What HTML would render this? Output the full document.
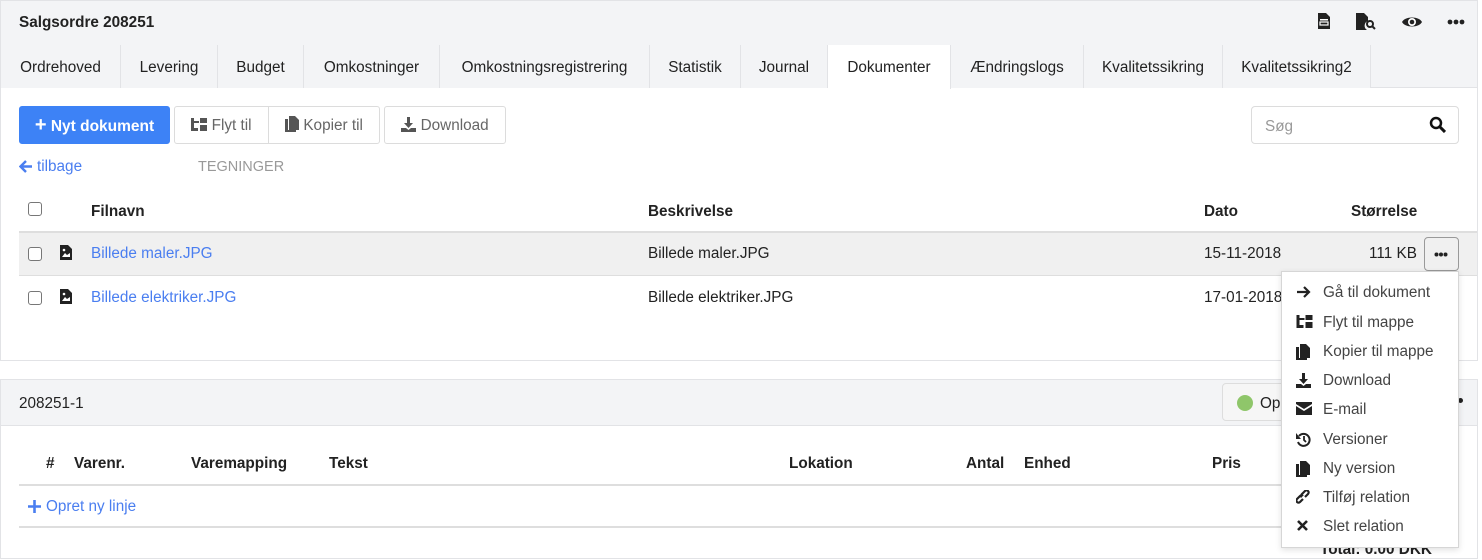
<!DOCTYPE html>
<html><head><meta charset="utf-8"><style>
*{box-sizing:border-box;margin:0;padding:0}
body{width:1482px;height:551px;overflow:hidden;background:#fff;font-family:"Liberation Sans",sans-serif;font-size:15.3px;line-height:20px;color:#222;position:relative}
.a{position:absolute;white-space:nowrap}
.panel{position:absolute;left:0;width:1478px;border:1px solid #e2e3e6;background:#fff}
.hd{background:#f3f4f6;border-bottom:1px solid #e2e3e6}
.tab{position:absolute;top:45px;height:43px;line-height:45px;text-align:center;border-right:1px solid #e2e3e6;background:#f3f4f6}
.btn{position:absolute;top:106px;height:38px;border:1px solid #dcdcdc;border-radius:3px;color:#666;line-height:37px;text-align:center;background:#fff}
.cb{position:absolute;width:14px;height:14px;border:1.5px solid #777;border-radius:3px;background:#fff}
b{font-weight:bold}
.lnk{color:#4a7ef0}
.mi{position:absolute;left:1296px;width:160px;height:20px;color:#444}
.mi svg{position:absolute;left:0;top:2px}
.mi span{position:absolute;left:27px;top:0}
</style></head><body>
<div class="panel" style="top:0;height:361px">
 <div class="hd" style="height:45px"></div>
</div>
<div class="a" style="left:19px;top:13px"><b style="font-weight:600">Salgsordre 208251</b></div>
<svg class="a" style="left:1318px;top:13px" width="12" height="16" viewBox="0 0 12 16"><path d="M0 0h8l4 4v12H0z" fill="#222"/><rect x="2" y="6" width="8" height="1.5" fill="#fff"/><rect x="2" y="9" width="8" height="3" fill="none" stroke="#fff" stroke-width="1.2"/></svg>
<svg class="a" style="left:1356px;top:13px" width="20" height="17" viewBox="0 0 20 17"><path d="M0 0h8l4 4v4a5 5 0 0 0-1 9H0z" fill="#222"/><circle cx="14" cy="11" r="3" fill="none" stroke="#222" stroke-width="2"/><path d="M16 13l3 3" stroke="#222" stroke-width="2"/></svg>
<svg class="a" style="left:1402px;top:15px" width="20" height="14" viewBox="0 0 20 14"><path d="M0 7C3 1 17 1 20 7C17 13 3 13 0 7z" fill="#222"/><circle cx="10" cy="7" r="4" fill="#fff"/><circle cx="10" cy="7" r="2.3" fill="#222"/></svg>
<svg class="a" style="left:1447px;top:19px" width="18" height="6" viewBox="0 0 18 6"><circle cx="3" cy="3" r="2.4" fill="#222"/><circle cx="9" cy="3" r="2.4" fill="#222"/><circle cx="15" cy="3" r="2.4" fill="#222"/></svg>
<div class="a" style="left:1px;top:45px;width:1476px;height:43px;background:#f3f4f6;border-bottom:1px solid #e2e3e6"></div>
<div class="tab" style="left:1px;width:120px">Ordrehoved</div>
<div class="tab" style="left:121px;width:97px">Levering</div>
<div class="tab" style="left:218px;width:86px">Budget</div>
<div class="tab" style="left:304px;width:136px">Omkostninger</div>
<div class="tab" style="left:440px;width:210px">Omkostningsregistrering</div>
<div class="tab" style="left:650px;width:91px">Statistik</div>
<div class="tab" style="left:741px;width:87px">Journal</div>
<div class="tab" style="left:828px;width:123px;background:#fff;height:44px">Dokumenter</div>
<div class="tab" style="left:951px;width:133px">Ændringslogs</div>
<div class="tab" style="left:1084px;width:139px">Kvalitetssikring</div>
<div class="tab" style="left:1223px;width:148px">Kvalitetssikring2</div>
<div class="btn" style="left:19px;width:151px;background:#3d82f6;border-color:#3d82f6;color:#fff;font-weight:bold;font-size:15.5px"><span style="font-size:20px">+</span> Nyt dokument</div>
<div class="btn" style="left:174px;width:95px;border-radius:3px 0 0 3px">
<svg style="vertical-align:-2px" width="16" height="14" viewBox="0 0 16 14"><path d="M0 0h3v10h4v3H0z M9 0h7v5H9z M9 7h7v6H9z" fill="#555"/><path d="M3 4h5" stroke="#555" stroke-width="2"/></svg> Flyt til</div>
<div class="btn" style="left:268px;width:112px;border-radius:0 3px 3px 0">
<svg style="vertical-align:-2px" width="14" height="16" viewBox="0 0 14 16"><path d="M0 3h3v11h8v2H0z" fill="#555"/><path d="M4 0h6l4 4v10H4z" fill="#555"/></svg> Kopier til</div>
<div class="btn" style="left:384px;width:122px">
<svg style="vertical-align:-2px" width="15" height="15" viewBox="0 0 15 15"><path d="M6 0h3v6h3l-4.5 5L3 6h3z M0 11h5l2.5 2 2.5-2h5v4H0z" fill="#555"/></svg> Download</div>
<div class="a" style="left:1251px;top:106px;width:208px;height:38px;border:1px solid #dcdcdc;border-radius:4px"></div>
<div class="a" style="left:1265px;top:117px;color:#999">Søg</div>
<svg class="a" style="left:1429px;top:116px" width="17" height="17" viewBox="0 0 17 17"><circle cx="7" cy="7" r="5" fill="none" stroke="#111" stroke-width="2.5"/><path d="M11 11l5 5" stroke="#111" stroke-width="3"/></svg>
<svg class="a" style="left:19px;top:160px" width="14" height="13" viewBox="0 0 14 13"><path d="M13 6.5H2M7 1L1.5 6.5 7 12" fill="none" stroke="#4a7ef0" stroke-width="2.4"/></svg>
<div class="a lnk" style="left:37px;top:157px">tilbage</div>
<div class="a" style="left:198px;top:157px;color:#999;font-size:14.5px">TEGNINGER</div>
<div class="cb" style="left:28px;top:202px"></div>
<div class="a" style="left:91px;top:202px"><b>Filnavn</b></div>
<div class="a" style="left:648px;top:202px"><b>Beskrivelse</b></div>
<div class="a" style="left:1204px;top:202px"><b>Dato</b></div>
<div class="a" style="left:1351px;top:202px"><b>Størrelse</b></div>
<div class="a" style="left:19px;top:231px;width:1458px;height:45px;background:#f0f0f0;border-top:2px solid #dedede;border-bottom:1px solid #dedede"></div>
<div class="cb" style="left:28px;top:247px"></div>
<div class="cb" style="left:28px;top:291px"></div>
<svg class="a" style="left:60px;top:245px" width="12" height="15" viewBox="0 0 12 15"><path d="M0 0h8l4 4v11H0z" fill="#222"/><path d="M2 12l3-4 2 2 3-2v4z" fill="#fff"/><circle cx="4" cy="5" r="1.3" fill="#fff"/></svg>
<svg class="a" style="left:60px;top:289px" width="12" height="15" viewBox="0 0 12 15"><path d="M0 0h8l4 4v11H0z" fill="#222"/><path d="M2 12l3-4 2 2 3-2v4z" fill="#fff"/><circle cx="4" cy="5" r="1.3" fill="#fff"/></svg>
<div class="a lnk" style="left:91px;top:244px">Billede maler.JPG</div>
<div class="a lnk" style="left:91px;top:288px">Billede elektriker.JPG</div>
<div class="a" style="left:648px;top:244px">Billede maler.JPG</div>
<div class="a" style="left:648px;top:288px">Billede elektriker.JPG</div>
<div class="a" style="left:1204px;top:244px">15-11-2018</div>
<div class="a" style="left:1204px;top:288px">17-01-2018</div>
<div class="a" style="left:1369px;top:244px">111 KB</div>
<div class="a" style="left:1424px;top:237px;width:35px;height:34px;border:1px solid #999;border-radius:4px;background:#f0f0f0"></div>
<svg class="a" style="left:1434px;top:252px" width="14" height="5" viewBox="0 0 14 5"><circle cx="2.5" cy="2.5" r="2" fill="#222"/><circle cx="7" cy="2.5" r="2" fill="#222"/><circle cx="11.5" cy="2.5" r="2" fill="#222"/></svg>
<div class="panel" style="top:379px;height:180px"><div class="hd" style="height:46px"></div></div>
<div class="a" style="left:19px;top:394px">208251-1</div>
<div class="a" style="left:1222px;top:383px;width:80px;height:38px;border:1px solid #ddd;border-radius:4px;background:#f6f6f6"></div>
<div class="a" style="left:1237px;top:395px;width:16px;height:16px;border-radius:50%;background:#8fc66a"></div>
<div class="a" style="left:1260px;top:394px">Op</div>
<div class="a" style="left:1458px;top:398px;width:5px;height:5px;border-radius:50%;background:#222"></div>
<div class="a" style="left:46px;top:454px"><b>#</b></div>
<div class="a" style="left:74px;top:454px"><b>Varenr.</b></div>
<div class="a" style="left:191px;top:454px"><b>Varemapping</b></div>
<div class="a" style="left:329px;top:454px"><b>Tekst</b></div>
<div class="a" style="left:789px;top:454px"><b>Lokation</b></div>
<div class="a" style="left:966px;top:454px"><b>Antal</b></div>
<div class="a" style="left:1024px;top:454px"><b>Enhed</b></div>
<div class="a" style="left:1212px;top:454px"><b>Pris</b></div>
<div class="a" style="left:19px;top:484px;width:1440px;height:2px;background:#dedede"></div>
<svg class="a" style="left:28px;top:500px" width="13" height="13" viewBox="0 0 13 13"><path d="M6.5 0v13M0 6.5h13" stroke="#4a7ef0" stroke-width="2.6"/></svg>
<div class="a lnk" style="left:46px;top:497px">Opret ny linje</div>
<div class="a" style="left:19px;top:526px;width:1440px;height:2px;background:#dedede"></div>
<div class="a" style="left:1320px;top:540px"><b>Total: 0.00 DKK</b></div>
<div class="a" style="left:1281px;top:271px;width:178px;height:277px;background:#fff;border:1px solid #d6d6d6;box-shadow:0 2px 6px rgba(0,0,0,.12)"></div>
<div class="mi" style="top:283px"><svg width="15" height="14" viewBox="0 0 15 14"><path d="M1 7h12M8 2l5 5-5 5" fill="none" stroke="#222" stroke-width="2.2"/></svg><span>Gå til dokument</span></div>
<div class="mi" style="top:313px"><svg width="17" height="14" viewBox="0 0 16 14"><path d="M0 0h3v10h4v3H0z M9 0h7v5H9z M9 7h7v6H9z" fill="#222"/><path d="M3 4h5" stroke="#222" stroke-width="2"/></svg><span>Flyt til mappe</span></div>
<div class="mi" style="top:342px"><svg width="14" height="16" viewBox="0 0 14 16"><path d="M0 3h3v11h8v2H0z M4 0h6l4 4v10H4z" fill="#222"/></svg><span>Kopier til mappe</span></div>
<div class="mi" style="top:371px"><svg width="15" height="15" viewBox="0 0 15 15"><path d="M6 0h3v6h3l-4.5 5L3 6h3z M0 11h5l2.5 2 2.5-2h5v4H0z" fill="#222"/></svg><span>Download</span></div>
<div class="mi" style="top:400px"><svg width="16" height="13" viewBox="0 0 16 13"><path d="M0 0h16v2L8 7 0 2z M0 4l8 5 8-5v9H0z" fill="#222"/></svg><span>E-mail</span></div>
<div class="mi" style="top:430px"><svg width="15" height="15" viewBox="0 0 15 15"><path d="M3 4A6 6 0 1 1 2 10" fill="none" stroke="#222" stroke-width="2"/><path d="M0 1v6h5z" fill="#222"/><path d="M8 4v4l2 2" fill="none" stroke="#222" stroke-width="1.8"/></svg><span>Versioner</span></div>
<div class="mi" style="top:459px"><svg width="14" height="16" viewBox="0 0 14 16"><path d="M0 3h3v11h8v2H0z M4 0h6l4 4v10H4z" fill="#222"/></svg><span>Ny version</span></div>
<div class="mi" style="top:488px"><svg width="16" height="16" viewBox="0 0 16 16"><path d="M7 9l-3 3a2 2 0 0 1-3-3l3-3a2 2 0 0 1 3 0M9 7l3-3a2 2 0 0 0-3-3L6 4a2 2 0 0 0 0 3" fill="none" stroke="#222" stroke-width="2.2"/></svg><span>Tilføj relation</span></div>
<div class="mi" style="top:517px"><svg width="13" height="13" viewBox="0 0 13 13"><path d="M2 2l9 9M11 2l-9 9" stroke="#222" stroke-width="2.6"/></svg><span>Slet relation</span></div>
</body></html>
